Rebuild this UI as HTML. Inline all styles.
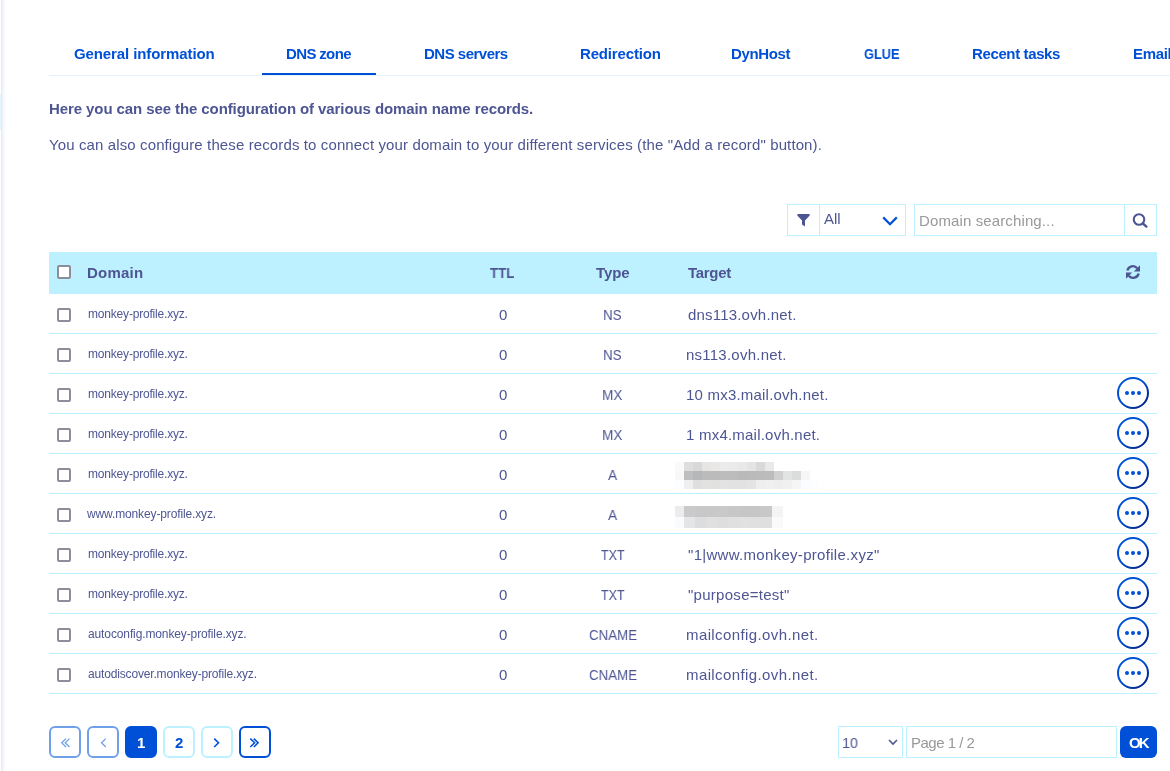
<!DOCTYPE html><html><head><meta charset="utf-8"><style>
*{margin:0;padding:0;box-sizing:border-box}
html,body{-webkit-font-smoothing:antialiased;width:1170px;height:771px;overflow:hidden;background:#fff;font-family:"Liberation Sans",sans-serif;color:#4d5693}
.t{position:absolute;will-change:transform;white-space:pre;line-height:15px;font-size:15px}
.s{font-size:12px;line-height:12px}
.b{font-weight:700}
.blue{color:#0050d7}
.gr{color:#999}
.sh{position:absolute;left:0;top:0;width:6px;height:771px;background:linear-gradient(90deg,#fff 0,#fff 1px,#e4e4f4 1px,#eeeef8 2px,#f6f6fc 3.5px,#fdfdff 5px,#fff 6px)}
.hl{position:absolute;left:0;top:94px;width:1px;height:36px;background:#e3f6fb}
.tabline{position:absolute;left:49px;top:75px;width:1121px;height:1px;background:#e6f3fb}
.ul{position:absolute;left:262px;top:73px;width:114px;height:2px;background:#0050d7}
.box{position:absolute;border:1px solid #bef1ff;background:#fff}
.hdr{position:absolute;left:49px;top:252px;width:1108px;height:42px;background:#bef1ff}
.rb{position:absolute;left:49px;width:1108px;height:1px;background:#bef1ff}
.cb{position:absolute;left:57px;width:14px;height:14px;border:2px solid #8d8c9a;border-radius:2px;background:#fff}
.pg{position:absolute;top:726px;width:32px;height:32px;border:2px solid #bef1ff;border-radius:6px;background:#fff}
.px{position:absolute}
.bl{position:absolute}
</style></head><body>
<div class="sh"></div><div class="hl"></div>
<div class="tabline"></div><div class="ul"></div>
<div id="tab0" class="t b blue" style="left:73.66px;top:46px;letter-spacing:-0.100px">General information</div>
<div id="tab1" class="t b blue" style="left:286.10px;top:46px;letter-spacing:-0.643px">DNS zone</div>
<div id="tab2" class="t b blue" style="left:423.68px;top:46px;letter-spacing:-0.504px">DNS servers</div>
<div id="tab3" class="t b blue" style="left:579.76px;top:46px;letter-spacing:-0.162px">Redirection</div>
<div id="tab4" class="t b blue" style="left:731.36px;top:46px;letter-spacing:-0.360px">DynHost</div>
<div id="tab5" class="t b blue" style="left:864.04px;top:46px;transform:scaleX(0.8504);transform-origin:0 0">GLUE</div>
<div id="tab6" class="t b blue" style="left:972.36px;top:46px;letter-spacing:-0.376px">Recent tasks</div>
<div id="tab7" class="t b blue" style="left:1133.40px;top:46px;letter-spacing:-0.35px">Email</div>
<div id="h1" class="t b" style="left:49.10px;top:101px;letter-spacing:-0.091px">Here you can see the configuration of various domain name records.</div>
<div id="p1" class="t " style="left:49.00px;top:137px;letter-spacing:0.118px">You can also configure these records to connect your domain to your different services (the "Add a record" button).</div>
<div class="box" style="left:787px;top:204px;width:33px;height:32px"></div><div class="box" style="left:819px;top:204px;width:87px;height:32px"></div><svg class="px" style="left:797px;top:214px" width="13" height="13" viewBox="0 0 13 13"><path d="M0.3 0.8Q0.3 0 1.1 0H11.9Q12.7 0 12.7 0.8V1.4L8 6.4V12.6L5 10.4V6.4L0.3 1.4Z" fill="#4d5693"/></svg>
<div id="all" class="t " style="left:824.00px;top:211px">All</div>
<svg class="px" style="left:882px;top:216px" width="16" height="10" viewBox="0 0 16 10"><path d="M1.2 1.4L8 8.2L14.8 1.4" fill="none" stroke="#0050d7" stroke-width="2.2"/></svg>
<div class="box" style="left:914px;top:204px;width:211px;height:32px"></div><div class="box" style="left:1124px;top:204px;width:33px;height:32px"></div><div id="ph" class="t gr" style="left:918.74px;top:212.6px;letter-spacing:0.120px">Domain searching...</div>
<svg class="px" style="left:1130px;top:211px" width="20" height="20" viewBox="0 0 20 20"><circle cx="9" cy="8.5" r="5.25" fill="none" stroke="#4d5693" stroke-width="2.1"/><path d="M12.9 12.5L16.4 15.6" stroke="#4d5693" stroke-width="2.4" stroke-linecap="round"/></svg>
<div class="hdr"></div><div class="cb" style="top:265px"></div>
<div id="hd0" class="t b" style="left:86.78px;top:265px;letter-spacing:0.216px">Domain</div>
<div id="hd1" class="t b" style="left:490.48px;top:265px;transform:scaleX(0.8878);transform-origin:0 0">TTL</div>
<div id="hd2" class="t b" style="left:596.00px;top:265px;letter-spacing:-0.060px">Type</div>
<div id="hd3" class="t b" style="left:687.84px;top:265px;letter-spacing:-0.288px">Target</div>
<svg class="px" style="left:1125px;top:264px" width="16" height="16" viewBox="0 0 16 16"><path d="M2.4 6.6A5.6 5.6 0 0 1 12.2 4.2" fill="none" stroke="#4d5693" stroke-width="2.35"/><path d="M15 1.2V7.4H8.8Z" fill="#4d5693"/><path d="M13.6 9.4A5.6 5.6 0 0 1 3.8 11.8" fill="none" stroke="#4d5693" stroke-width="2.35"/><path d="M1 14.8V8.6H7.2Z" fill="#4d5693"/></svg>
<div class="rb" style="top:333px"></div><div class="cb" style="top:308px"></div>
<div id="d0" class="t s" style="left:87.62px;top:307.8px;letter-spacing:-0.190px">monkey-profile.xyz.</div>
<div id="ttl0" class="t " style="left:499.08px;top:307px">0</div>
<div id="ty0" class="t " style="left:603.08px;top:307px;transform:scaleX(0.8940);transform-origin:0 0">NS</div>
<div id="tg0" class="t " style="left:688.00px;top:307px;letter-spacing:0.193px">dns113.ovh.net.</div>
<div class="rb" style="top:373px"></div><div class="cb" style="top:348px"></div>
<div id="d1" class="t s" style="left:87.62px;top:347.8px;letter-spacing:-0.190px">monkey-profile.xyz.</div>
<div id="ttl1" class="t " style="left:499.08px;top:347px">0</div>
<div id="ty1" class="t " style="left:603.08px;top:347px;transform:scaleX(0.8940);transform-origin:0 0">NS</div>
<div id="tg1" class="t " style="left:686.44px;top:347px;letter-spacing:0.235px">ns113.ovh.net.</div>
<div class="rb" style="top:413px"></div><div class="cb" style="top:388px"></div>
<div id="d2" class="t s" style="left:87.62px;top:387.8px;letter-spacing:-0.190px">monkey-profile.xyz.</div>
<div id="ttl2" class="t " style="left:499.08px;top:387px">0</div>
<div id="ty2" class="t " style="left:602.16px;top:387px;transform:scaleX(0.9057);transform-origin:0 0">MX</div>
<div id="tg2" class="t " style="left:686.44px;top:387px;letter-spacing:0.208px">10 mx3.mail.ovh.net.</div>
<svg class="px" style="left:1117px;top:377px" width="32" height="32" viewBox="0 0 32 32"><defs><linearGradient id="g2" x1="0" y1="0" x2="1" y2="1"><stop offset="0.45" stop-color="#0050d7"/><stop offset="1" stop-color="#001a6e"/></linearGradient></defs><circle cx="16" cy="16" r="15" fill="#fff" stroke="url(#g2)" stroke-width="2"/><circle cx="10" cy="16" r="2" fill="#0050d7"/><circle cx="16" cy="16" r="2" fill="#0050d7"/><circle cx="22" cy="16" r="2" fill="#0050d7"/></svg>
<div class="rb" style="top:453px"></div><div class="cb" style="top:428px"></div>
<div id="d3" class="t s" style="left:87.62px;top:427.8px;letter-spacing:-0.190px">monkey-profile.xyz.</div>
<div id="ttl3" class="t " style="left:499.08px;top:427px">0</div>
<div id="ty3" class="t " style="left:602.16px;top:427px;transform:scaleX(0.9057);transform-origin:0 0">MX</div>
<div id="tg3" class="t " style="left:686.44px;top:427px;letter-spacing:0.220px">1 mx4.mail.ovh.net.</div>
<svg class="px" style="left:1117px;top:417px" width="32" height="32" viewBox="0 0 32 32"><defs><linearGradient id="g3" x1="0" y1="0" x2="1" y2="1"><stop offset="0.45" stop-color="#0050d7"/><stop offset="1" stop-color="#001a6e"/></linearGradient></defs><circle cx="16" cy="16" r="15" fill="#fff" stroke="url(#g3)" stroke-width="2"/><circle cx="10" cy="16" r="2" fill="#0050d7"/><circle cx="16" cy="16" r="2" fill="#0050d7"/><circle cx="22" cy="16" r="2" fill="#0050d7"/></svg>
<div class="rb" style="top:493px"></div><div class="cb" style="top:468px"></div>
<div id="d4" class="t s" style="left:87.62px;top:467.8px;letter-spacing:-0.190px">monkey-profile.xyz.</div>
<div id="ttl4" class="t " style="left:499.08px;top:467px">0</div>
<div id="ty4" class="t " style="left:607.98px;top:467px;transform:scaleX(0.9176);transform-origin:0 0">A</div>
<div class="bl" style="left:675px;top:462px;width:9px;height:9px;background:#fafafa"></div><div class="bl" style="left:684px;top:462px;width:9px;height:9px;background:#dedede"></div><div class="bl" style="left:693px;top:462px;width:9px;height:9px;background:#d8d8d8"></div><div class="bl" style="left:702px;top:462px;width:9px;height:9px;background:#e6e5e4"></div><div class="bl" style="left:711px;top:462px;width:9px;height:9px;background:#e8e8e8"></div><div class="bl" style="left:720px;top:462px;width:9px;height:9px;background:#ebebeb"></div><div class="bl" style="left:729px;top:462px;width:9px;height:9px;background:#eaeaea"></div><div class="bl" style="left:738px;top:462px;width:9px;height:9px;background:#e9e9e9"></div><div class="bl" style="left:747px;top:462px;width:9px;height:9px;background:#e4e4e4"></div><div class="bl" style="left:756px;top:462px;width:9px;height:9px;background:#d9d9d9"></div><div class="bl" style="left:765px;top:462px;width:9px;height:9px;background:#e9e9e9"></div><div class="bl" style="left:675px;top:471px;width:9px;height:9px;background:#f8f8f8"></div><div class="bl" style="left:684px;top:471px;width:9px;height:9px;background:#bebec0"></div><div class="bl" style="left:693px;top:471px;width:9px;height:9px;background:#b6b7b9"></div><div class="bl" style="left:702px;top:471px;width:9px;height:9px;background:#babbba"></div><div class="bl" style="left:711px;top:471px;width:9px;height:9px;background:#bbbbbb"></div><div class="bl" style="left:720px;top:471px;width:9px;height:9px;background:#bcbcbc"></div><div class="bl" style="left:729px;top:471px;width:9px;height:9px;background:#bbbbbb"></div><div class="bl" style="left:738px;top:471px;width:9px;height:9px;background:#b9b9b9"></div><div class="bl" style="left:747px;top:471px;width:9px;height:9px;background:#bababa"></div><div class="bl" style="left:756px;top:471px;width:9px;height:9px;background:#bbbbbb"></div><div class="bl" style="left:765px;top:471px;width:9px;height:9px;background:#bcbcbc"></div><div class="bl" style="left:774px;top:471px;width:9px;height:9px;background:#d0d0d0"></div><div class="bl" style="left:783px;top:471px;width:9px;height:9px;background:#e2e3e3"></div><div class="bl" style="left:792px;top:471px;width:9px;height:9px;background:#dcdcdc"></div><div class="bl" style="left:801px;top:471px;width:9px;height:9px;background:#f6f6f6"></div><div class="bl" style="left:675px;top:480px;width:9px;height:9px;background:#fcfdff"></div><div class="bl" style="left:684px;top:480px;width:9px;height:9px;background:#eef0f0"></div><div class="bl" style="left:693px;top:480px;width:9px;height:9px;background:#dfdfdf"></div><div class="bl" style="left:702px;top:480px;width:9px;height:9px;background:#e2e2e1"></div><div class="bl" style="left:711px;top:480px;width:9px;height:9px;background:#e1e1e1"></div><div class="bl" style="left:720px;top:480px;width:9px;height:9px;background:#e3e3e3"></div><div class="bl" style="left:729px;top:480px;width:9px;height:9px;background:#e2e2e2"></div><div class="bl" style="left:738px;top:480px;width:9px;height:9px;background:#e2e2e2"></div><div class="bl" style="left:747px;top:480px;width:9px;height:9px;background:#e4e4e4"></div><div class="bl" style="left:756px;top:480px;width:9px;height:9px;background:#eeeeee"></div><div class="bl" style="left:765px;top:480px;width:9px;height:9px;background:#f0f0f0"></div><div class="bl" style="left:774px;top:480px;width:9px;height:9px;background:#eeeeee"></div><div class="bl" style="left:783px;top:480px;width:9px;height:9px;background:#f0f0f0"></div><div class="bl" style="left:792px;top:480px;width:9px;height:9px;background:#f5f5f5"></div><div class="bl" style="left:801px;top:480px;width:9px;height:9px;background:#fafcff"></div><div class="bl" style="left:810px;top:480px;width:9px;height:9px;background:#fcfdff"></div>
<svg class="px" style="left:1117px;top:457px" width="32" height="32" viewBox="0 0 32 32"><defs><linearGradient id="g4" x1="0" y1="0" x2="1" y2="1"><stop offset="0.45" stop-color="#0050d7"/><stop offset="1" stop-color="#001a6e"/></linearGradient></defs><circle cx="16" cy="16" r="15" fill="#fff" stroke="url(#g4)" stroke-width="2"/><circle cx="10" cy="16" r="2" fill="#0050d7"/><circle cx="16" cy="16" r="2" fill="#0050d7"/><circle cx="22" cy="16" r="2" fill="#0050d7"/></svg>
<div class="rb" style="top:533px"></div><div class="cb" style="top:508px"></div>
<div id="d5" class="t s" style="left:87.08px;top:507.8px;letter-spacing:-0.131px">www.monkey-profile.xyz.</div>
<div id="ttl5" class="t " style="left:499.08px;top:507px">0</div>
<div id="ty5" class="t " style="left:607.98px;top:507px;transform:scaleX(0.9176);transform-origin:0 0">A</div>
<div class="bl" style="left:675px;top:506px;width:9px;height:11px;background:#ececec"></div><div class="bl" style="left:684px;top:506px;width:11px;height:11px;background:#cacacc"></div><div class="bl" style="left:695px;top:506px;width:11px;height:11px;background:#c8c8c8"></div><div class="bl" style="left:706px;top:506px;width:11px;height:11px;background:#c8c8c8"></div><div class="bl" style="left:717px;top:506px;width:11px;height:11px;background:#c9c9c9"></div><div class="bl" style="left:728px;top:506px;width:11px;height:11px;background:#c7c7c7"></div><div class="bl" style="left:739px;top:506px;width:11px;height:11px;background:#c6c6c6"></div><div class="bl" style="left:750px;top:506px;width:11px;height:11px;background:#c6c6c6"></div><div class="bl" style="left:761px;top:506px;width:11px;height:11px;background:#c8c8c8"></div><div class="bl" style="left:772px;top:506px;width:11px;height:11px;background:#f4f4f4"></div><div class="bl" style="left:675px;top:517px;width:9px;height:11px;background:#fafbfd"></div><div class="bl" style="left:684px;top:517px;width:11px;height:11px;background:#e4e5e7"></div><div class="bl" style="left:695px;top:517px;width:11px;height:11px;background:#dcdedd"></div><div class="bl" style="left:706px;top:517px;width:11px;height:11px;background:#e0e0e0"></div><div class="bl" style="left:717px;top:517px;width:11px;height:11px;background:#dedede"></div><div class="bl" style="left:728px;top:517px;width:11px;height:11px;background:#e0e0e0"></div><div class="bl" style="left:739px;top:517px;width:11px;height:11px;background:#e1e1e1"></div><div class="bl" style="left:750px;top:517px;width:11px;height:11px;background:#e0e0e0"></div><div class="bl" style="left:761px;top:517px;width:11px;height:11px;background:#dfdfdf"></div><div class="bl" style="left:772px;top:517px;width:11px;height:11px;background:#fafafa"></div>
<svg class="px" style="left:1117px;top:497px" width="32" height="32" viewBox="0 0 32 32"><defs><linearGradient id="g5" x1="0" y1="0" x2="1" y2="1"><stop offset="0.45" stop-color="#0050d7"/><stop offset="1" stop-color="#001a6e"/></linearGradient></defs><circle cx="16" cy="16" r="15" fill="#fff" stroke="url(#g5)" stroke-width="2"/><circle cx="10" cy="16" r="2" fill="#0050d7"/><circle cx="16" cy="16" r="2" fill="#0050d7"/><circle cx="22" cy="16" r="2" fill="#0050d7"/></svg>
<div class="rb" style="top:573px"></div><div class="cb" style="top:548px"></div>
<div id="d6" class="t s" style="left:87.62px;top:547.8px;letter-spacing:-0.190px">monkey-profile.xyz.</div>
<div id="ttl6" class="t " style="left:499.08px;top:547px">0</div>
<div id="ty6" class="t " style="left:601.02px;top:547px;transform:scaleX(0.8302);transform-origin:0 0">TXT</div>
<div id="tg6" class="t " style="left:688.00px;top:547px;letter-spacing:0.302px">"1|www.monkey-profile.xyz"</div>
<svg class="px" style="left:1117px;top:537px" width="32" height="32" viewBox="0 0 32 32"><defs><linearGradient id="g6" x1="0" y1="0" x2="1" y2="1"><stop offset="0.45" stop-color="#0050d7"/><stop offset="1" stop-color="#001a6e"/></linearGradient></defs><circle cx="16" cy="16" r="15" fill="#fff" stroke="url(#g6)" stroke-width="2"/><circle cx="10" cy="16" r="2" fill="#0050d7"/><circle cx="16" cy="16" r="2" fill="#0050d7"/><circle cx="22" cy="16" r="2" fill="#0050d7"/></svg>
<div class="rb" style="top:613px"></div><div class="cb" style="top:588px"></div>
<div id="d7" class="t s" style="left:87.62px;top:587.8px;letter-spacing:-0.190px">monkey-profile.xyz.</div>
<div id="ttl7" class="t " style="left:499.08px;top:587px">0</div>
<div id="ty7" class="t " style="left:601.02px;top:587px;transform:scaleX(0.8302);transform-origin:0 0">TXT</div>
<div id="tg7" class="t " style="left:688.00px;top:587px;letter-spacing:0.277px">"purpose=test"</div>
<svg class="px" style="left:1117px;top:577px" width="32" height="32" viewBox="0 0 32 32"><defs><linearGradient id="g7" x1="0" y1="0" x2="1" y2="1"><stop offset="0.45" stop-color="#0050d7"/><stop offset="1" stop-color="#001a6e"/></linearGradient></defs><circle cx="16" cy="16" r="15" fill="#fff" stroke="url(#g7)" stroke-width="2"/><circle cx="10" cy="16" r="2" fill="#0050d7"/><circle cx="16" cy="16" r="2" fill="#0050d7"/><circle cx="22" cy="16" r="2" fill="#0050d7"/></svg>
<div class="rb" style="top:653px"></div><div class="cb" style="top:628px"></div>
<div id="d8" class="t s" style="left:87.62px;top:627.8px;letter-spacing:-0.118px">autoconfig.monkey-profile.xyz.</div>
<div id="ttl8" class="t " style="left:499.08px;top:627px">0</div>
<div id="ty8" class="t " style="left:588.52px;top:627px;transform:scaleX(0.8857);transform-origin:0 0">CNAME</div>
<div id="tg8" class="t " style="left:686.44px;top:627px;letter-spacing:0.400px">mailconfig.ovh.net.</div>
<svg class="px" style="left:1117px;top:617px" width="32" height="32" viewBox="0 0 32 32"><defs><linearGradient id="g8" x1="0" y1="0" x2="1" y2="1"><stop offset="0.45" stop-color="#0050d7"/><stop offset="1" stop-color="#001a6e"/></linearGradient></defs><circle cx="16" cy="16" r="15" fill="#fff" stroke="url(#g8)" stroke-width="2"/><circle cx="10" cy="16" r="2" fill="#0050d7"/><circle cx="16" cy="16" r="2" fill="#0050d7"/><circle cx="22" cy="16" r="2" fill="#0050d7"/></svg>
<div class="rb" style="top:693px"></div><div class="cb" style="top:668px"></div>
<div id="d9" class="t s" style="left:87.62px;top:667.8px;letter-spacing:-0.163px">autodiscover.monkey-profile.xyz.</div>
<div id="ttl9" class="t " style="left:499.08px;top:667px">0</div>
<div id="ty9" class="t " style="left:588.52px;top:667px;transform:scaleX(0.8857);transform-origin:0 0">CNAME</div>
<div id="tg9" class="t " style="left:686.44px;top:667px;letter-spacing:0.400px">mailconfig.ovh.net.</div>
<svg class="px" style="left:1117px;top:657px" width="32" height="32" viewBox="0 0 32 32"><defs><linearGradient id="g9" x1="0" y1="0" x2="1" y2="1"><stop offset="0.45" stop-color="#0050d7"/><stop offset="1" stop-color="#001a6e"/></linearGradient></defs><circle cx="16" cy="16" r="15" fill="#fff" stroke="url(#g9)" stroke-width="2"/><circle cx="10" cy="16" r="2" fill="#0050d7"/><circle cx="16" cy="16" r="2" fill="#0050d7"/><circle cx="22" cy="16" r="2" fill="#0050d7"/></svg>
<div class="pg" style="left:49px;border-color:#70a0e8;background:#fff"></div><div class="pg" style="left:87px;border-color:#70a0e8;background:#fff"></div><div class="pg" style="left:125px;border-color:#0050d7;background:#0050d7"></div><div class="pg" style="left:163px;border-color:#bef1ff;background:#fff"></div><div class="pg" style="left:201px;border-color:#bef1ff;background:#fff"></div><div class="pg" style="left:239px;border-color:#0050d7;background:#fff"></div><svg class="px" style="left:0;top:0" width="300" height="771" viewBox="0 0 300 771"><path d="M66 738.6L61.7 742.8L66 747M69.5 738.6L65.2 742.8L69.5 747M105.8 738.6L101.5 742.8L105.8 747" fill="none" stroke="#70a0e8" stroke-width="1.3"/><path d="M214.2 738.6L218.5 742.8L214.2 747M250.3 738.6L254.60000000000002 742.8L250.3 747M253.8 738.6L258.1 742.8L253.8 747" fill="none" stroke="#0050d7" stroke-width="1.6"/></svg>
<div id="pg1" class="t b" style="left:136.70px;top:735px;color:#fff">1</div>
<div id="pg2" class="t b blue" style="left:175.00px;top:735px">2</div>
<div class="box" style="left:838px;top:726px;width:65px;height:32px"></div><div id="n10" class="t " style="left:842.14px;top:735px;transform:scaleX(0.9616);transform-origin:0 0">10</div>
<svg class="px" style="left:888px;top:739px" width="10" height="7" viewBox="0 0 10 7"><path d="M1 1L5 5L9 1" fill="none" stroke="#4d5693" stroke-width="1.6"/></svg>
<div class="box" style="left:906px;top:726px;width:211px;height:32px"></div><div id="pg12" class="t gr" style="left:911.40px;top:735px;letter-spacing:-0.500px">Page 1 / 2</div>
<div class="px" style="left:1120px;top:726px;width:37px;height:32px;background:#0050d7;border-radius:6px"></div><div id="ok" class="t b" style="left:1128.90px;top:735px;letter-spacing:-1.800px;color:#fff">OK</div>
</body></html>
